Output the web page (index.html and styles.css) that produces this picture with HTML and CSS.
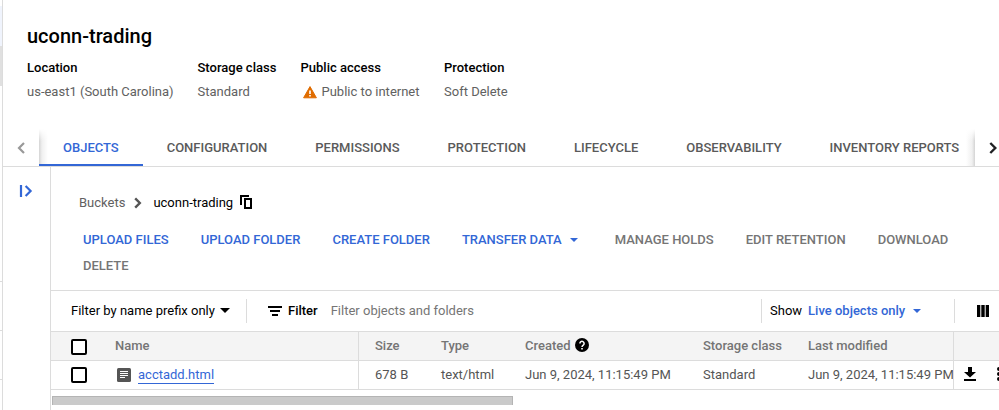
FILE: index.html
```html
<!DOCTYPE html>
<html lang="en">
	<head>
	<meta charset="utf-8">
	<title>uconn-trading</title>
	<link rel="stylesheet" href="styles.css">
	</head>

	<body>
		<nav class="rail">
			<div class="rail-item hover"></div>
			<div class="rail-item active"></div>
			<div class="rail-space"></div>
			<div class="rail-line"></div>
			<div class="rail-line"></div>
			<div class="rail-line"></div>
		</nav>

		<main class="page">
			<header class="bucket">
				<h1>uconn-trading</h1>
				<dl class="facts">
					<div class="fact location">
						<dt>Location</dt>
						<dd>us-east1 (South Carolina)</dd>
					</div>
					<div class="fact storage">
						<dt>Storage class</dt>
						<dd>Standard</dd>
					</div>
					<div class="fact access">
						<dt>Public access</dt>
						<dd>
							<svg class="warn" width="18" height="18" viewBox="0 0 18 18"><path fill="#e06c00" d="M9 3.6 L15.4 14.8 H2.6 Z" stroke="#e06c00" stroke-width="1" stroke-linejoin="round"/><path fill="#fff" d="M8.2 7.4h1.6v3.6H8.2zM8.2 12h1.6v1.5H8.2z"/></svg>
							Public to internet
						</dd>
					</div>
					<div class="fact">
						<dt>Protection</dt>
						<dd>Soft Delete</dd>
					</div>
				</dl>
			</header>

			<div class="tabs">
				<div class="pager prev">
					<svg width="18" height="18" viewBox="0 0 18 18"><path fill="none" stroke="#999" stroke-width="2.2" d="M12 4 L7 9 L12 14"/></svg>
				</div>
				<div class="tab-list">
					<a class="tab selected">OBJECTS</a>
					<a class="tab">CONFIGURATION</a>
					<a class="tab">PERMISSIONS</a>
					<a class="tab">PROTECTION</a>
					<a class="tab">LIFECYCLE</a>
					<a class="tab">OBSERVABILITY</a>
					<a class="tab">INVENTORY REPORTS</a>
				</div>
				<div class="pager next">
					<svg width="18" height="18" viewBox="0 0 18 18"><path fill="none" stroke="#202124" stroke-width="2.4" d="M6.3 4 L11.3 9 L6.3 14"/></svg>
				</div>
			</div>

			<div class="body">
				<aside class="side">
					<svg width="18" height="18" viewBox="0 0 18 18"><path fill="none" stroke="#3367d6" stroke-width="2.2" d="M4 3v12M8.6 4 L13.6 9 L8.6 14"/></svg>
				</aside>

				<section class="content">
					<div class="crumbs">
						<span class="crumb">Buckets</span>
						<svg width="18" height="18" viewBox="0 0 18 18"><path fill="none" stroke="#555" stroke-width="2.4" d="M7.2 4.4 L11.8 9 L7.2 13.6"/></svg>
						<span>uconn-trading</span>
						<svg class="copy" width="14" height="16" viewBox="0 0 14 16"><path fill="none" stroke="#000" stroke-width="2" d="M1 11V2h8M5 5h6v9H5z"/></svg>
					</div>

					<div class="actions">
						<a class="action">UPLOAD FILES</a>
						<a class="action">UPLOAD FOLDER</a>
						<a class="action">CREATE FOLDER</a>
						<a class="action menu">TRANSFER DATA<i class="caret"></i></a>
						<a class="action disabled">MANAGE HOLDS</a>
						<a class="action disabled">EDIT RETENTION</a>
						<a class="action disabled">DOWNLOAD</a>
						<a class="action disabled">DELETE</a>
					</div>

					<div class="filter-bar">
						<div class="prefix">Filter by name prefix only<i class="caret"></i></div>
						<div class="filter">
							<svg width="14" height="10" viewBox="0 0 14 10"><path d="M0 0h14v2H0zM2 4h10v2H2zM4 8h6v2H4z"/></svg>
							<b>Filter</b>
							<span class="hint">Filter objects and folders</span>
						</div>
						<div class="show">Show<b class="live">Live objects only</b><i class="caret"></i></div>
						<div class="columns">
							<svg width="12" height="12" viewBox="0 0 12 12"><path d="M0 0h3.3v12H0zM4.3 0h3.4v12H4.3zM8.7 0H12v12H8.7z"/></svg>
						</div>
					</div>

					<div class="row head">
						<div class="cell check"><i class="box"></i></div>
						<div class="cell name">Name</div>
						<div class="cell size">Size</div>
						<div class="cell type">Type</div>
						<div class="cell created">Created
							<svg class="help" width="14" height="14" viewBox="0 0 14 14"><circle cx="7" cy="7" r="7"/><path fill="none" stroke="#fff" stroke-width="1.5" d="M4.9 5.5a2.1 2.1 0 1 1 3.3 1.7C7.4 7.8 7 8.1 7 9"/><path fill="#fff" d="M6.2 10h1.6v1.5H6.2z"/></svg>
						</div>
						<div class="cell class">Storage class</div>
						<div class="cell modified">Last modified</div>
						<div class="cell tools"></div>
					</div>
					<div class="row">
						<div class="cell check"><i class="box"></i></div>
						<div class="cell name">
							<svg class="file" width="14" height="14" viewBox="0 0 14 14"><rect width="14" height="14" rx="1.5" fill="#555"/><path fill="#fff" d="M3 3h8v1H3zM3 5h8v1H3zM3 7h8v1H3zM3 9h5v1H3z"/></svg>
							<a class="link">acctadd.html</a>
						</div>
						<div class="cell size">678 B</div>
						<div class="cell type">text/html</div>
						<div class="cell created">Jun 9, 2024, 11:15:49 PM</div>
						<div class="cell class">Standard</div>
						<div class="cell modified">Jun 9, 2024, 11:15:49 PM</div>
						<div class="cell tools">
							<svg width="12" height="14" viewBox="0 0 12 14"><path d="M4 0h4v5h4L6 10.5 0 5h4zM0 12h12v2H0z"/></svg>
							<svg class="more" width="4" height="14" viewBox="0 0 4 14"><circle cx="2" cy="2" r="2"/><circle cx="2" cy="7" r="2"/><circle cx="2" cy="12" r="2"/></svg>
						</div>
					</div>

					<div class="scrollbar"></div>
				</section>
			</div>
		</main>
	</body>
</html>
```

FILE: styles.css
```css
* {
	box-sizing: border-box;
}

body {
	display: flex;
	width: 999px;
	height: 410px;
	margin: 0;
	overflow: hidden;
	background: #fff;
	font-family: Roboto, sans-serif;
	font-size: 13px;
	line-height: 20px;
	color: #000;
}

svg {
	display: block;
	flex: none;
}

b {
	font-weight: 500;
}

/* edge of the product navigation */
.rail {
	flex: none;
	width: 3px;
	padding-top: 6px;
	border-right: 1px solid #dcdcdc;
}

.rail-item {
	height: 40px;
}

.rail-item.hover {
	background: #f0f4fd;
}

.rail-item.active {
	background: #e0e0e0;
}

.rail-space {
	height: 147px;
}

.rail-line {
	height: 49px;
	border-bottom: 1px solid #dcdcdc;
}

.page {
	display: flex;
	flex-direction: column;
	flex: 1;
	min-width: 0;
}

.bucket {
	height: 129px;
	padding: 24px 24px 0;
}

h1 {
	margin: 0;
	font-size: 20px;
	font-weight: 500;
	line-height: 24px;
}

.facts {
	display: flex;
	margin: 10px 0 0;
}

.fact dt {
	font-weight: 500;
}

.fact dd {
	display: flex;
	align-items: center;
	margin: 4px 0 0;
	color: #616161;
	white-space: nowrap;
}

.location {
	width: 170.5px;
}

.storage {
	width: 103px;
}

.access {
	width: 143.5px;
}

.warn {
	margin-right: 3px;
}

.tabs {
	display: flex;
	flex: none;
	height: 38px;
	border-bottom: 1px solid #dcdcdc;
}

.pager {
	display: flex;
	align-items: center;
	flex: none;
}

.prev {
	width: 36px;
	padding-left: 9px;
}

.next {
	width: 24px;
	padding-left: 9px;
}

/* edge shadows, faded out towards the top */
.tab-list {
	display: flex;
	flex: 1;
	overflow: hidden;
	background:
		linear-gradient(#fff, rgba(255, 255, 255, 0) 12px),
		linear-gradient(to right, #d4d4d4, #f0f0f0 3px, #fff 9px, #fff calc(100% - 9px), #f0f0f0 calc(100% - 3px), #d4d4d4);
}

.tab {
	flex: none;
	padding: 0 23.95px 0 24px;
	border-bottom: 2px solid transparent;
	font-weight: 500;
	line-height: 37px;
	color: #5a5a5a;
}

.tab.selected {
	border-color: #3367d6;
	color: #3367d6;
}

.body {
	display: flex;
	flex: 1;
	min-height: 0;
}

.side {
	flex: none;
	width: 48px;
	padding: 15px 0 0 14px;
	border-right: 1px solid #dcdcdc;
}

.content {
	flex: 1;
	min-width: 0;
}

.crumbs {
	display: flex;
	align-items: center;
	padding: 26px 0 0 28px;
}

.crumbs svg {
	margin: 0 7px 0 3px;
}

.crumbs .copy {
	margin: -2px 0 0 7px;
}

.crumb {
	color: #616161;
}

.actions {
	display: flex;
	flex-wrap: wrap;
	column-gap: 32px;
	height: 63px;
	margin-top: 14px;
	padding-left: 32px;
	align-content: flex-start;
}

.action {
	font-weight: 500;
	line-height: 26px;
	color: #3367d6;
}

.action.menu {
	padding-right: 5px;
}

.action.disabled {
	color: #757575;
}

.caret {
	display: inline-block;
	margin-left: 8px;
	border: 4px solid transparent;
	border-top-color: currentColor;
	border-bottom: 0;
	vertical-align: 2px;
}

.filter-bar {
	display: flex;
	align-items: center;
	height: 41px;
	border-top: 1px solid #dcdcdc;
}

.prefix {
	width: 196px;
	padding-left: 20px;
	border-right: 1px solid #dcdcdc;
	line-height: 24px;
	white-space: nowrap;
}

.prefix .caret {
	margin-left: 5px;
	border-width: 5px 5px 0;
}

.filter {
	display: flex;
	align-items: center;
	flex: 1;
	padding-left: 21px;
}

.filter b {
	margin-left: 6px;
}

.hint {
	margin-left: 13px;
	color: #757575;
}

.show {
	width: 193px;
	padding-left: 8px;
	border-left: 1px solid #dcdcdc;
	line-height: 24px;
	white-space: nowrap;
}

.live {
	margin-left: 6px;
}

.live,
.show .caret {
	color: #3367d6;
}

.columns {
	display: flex;
	align-items: center;
	width: 45px;
	height: 24px;
	padding-left: 22px;
	border-left: 1px solid #dcdcdc;
}

.row {
	display: flex;
	height: 29px;
	border-bottom: 1px solid #dcdcdc;
	color: #555;
	overflow: hidden;
}

.row.head {
	height: 30px;
	border-top: 1px solid #dcdcdc;
	background: #f4f4f4;
	font-weight: 500;
	color: #757575;
}

.cell {
	display: flex;
	align-items: center;
	flex: none;
	white-space: nowrap;
}

.check {
	width: 64px;
	padding-left: 20px;
}

.box {
	width: 16px;
	height: 16px;
	margin-top: 2px;
	border: 2px solid #000;
	border-radius: 2px;
	background: #fff;
}

.row:not(.head) .box {
	margin-top: -1px;
}

.name {
	width: 244px;
	border-right: 1px solid #dcdcdc;
}

.file {
	margin: -1px 7px 0 2px;
}

.link {
	border-bottom: 1px solid #3367d6;
	line-height: 16px;
	color: #3367d6;
}

.size {
	width: 82px;
	padding-left: 16px;
}

.type {
	width: 84px;
}

.created {
	width: 178px;
}

.help {
	margin-left: 4px;
	margin-top: -2px;
}

.class {
	width: 105px;
}

.modified {
	width: 145px;
}

.tools {
	width: 46px;
	padding: 0 0 2px 10px;
	border-left: 1px solid #dcdcdc;
	color: #000;
}

.more {
	margin-left: 21px;
}

.scrollbar {
	width: 461px;
	height: 9px;
	margin: 6px 0 0 1px;
	border: 1px solid #b4b4b4;
	border-bottom: 0;
	background: #cacaca;
}
```
